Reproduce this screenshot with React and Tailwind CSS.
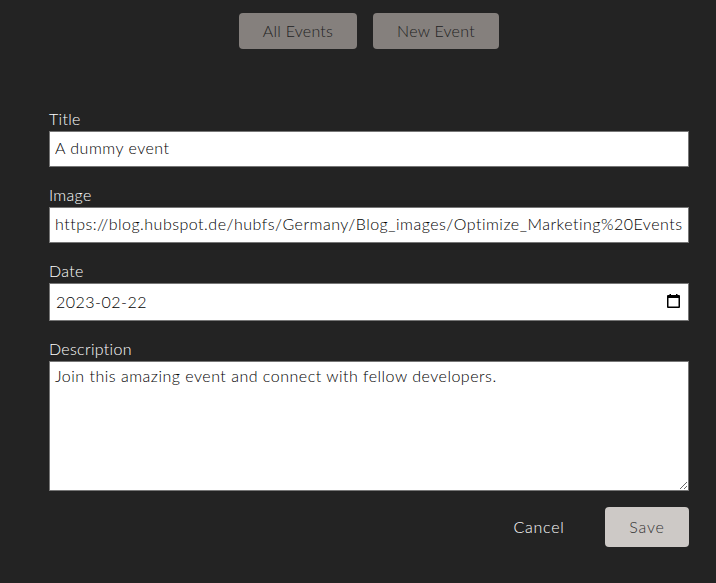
const font = "font-['Lato','Noto_Sans',sans-serif]";

function Field({ label, children, className = '' }) {
  return (
    <div className={`flex flex-col ${className}`}>
      <label className="text-[16px] font-light leading-[24px] text-white tracking-[0.3px]">{label}</label>
      {children}
    </div>
  );
}

const inputClass =
  "w-full bg-white border border-[#767676] text-[16px] font-light text-black tracking-[0.5px] px-[5px] outline-none font-['Lato','Noto_Sans',sans-serif]";

function CalendarIcon() {
  return (
    <svg width="13" height="14" viewBox="0 0 13 14" className="absolute right-[9px] top-[11px]">
      <path d="M2.5 0h1.5v1h5V0h1.5v1h1.5a1 1 0 0 1 1 1v11a1 1 0 0 1-1 1H1a1 1 0 0 1-1-1V2a1 1 0 0 1 1-1h1.5z M1.5 4v8.5h10V4z" fill="#000" fillRule="evenodd" />
    </svg>
  );
}

export default function App() {
  return (
    <div className={`min-h-[583px] bg-[#232323] pl-[49px] pr-[27px] ${font} overflow-hidden`}>
      <div className="flex justify-center gap-4 pt-[13px]">
        <button className="w-[118px] h-9 bg-[#85807d] rounded text-[16px] font-light text-[#222] tracking-[0.25px]">All Events</button>
        <button className="w-[126px] h-9 bg-[#85807d] rounded text-[16px] font-light text-[#222] tracking-[0.25px]">New Event</button>
      </div>

      <form className="mt-[58px] flex flex-col">
        <Field label="Title">
          <input className={`${inputClass} h-9 pb-[3px]`} defaultValue="A dummy event" />
        </Field>
        <Field label="Image" className="mt-4">
          <input
            className={`${inputClass} h-9 pb-[3px]`}
            defaultValue="https://blog.hubspot.de/hubfs/Germany/Blog_images/Optimize_Marketing%20Events.jpg"
          />
        </Field>
        <Field label="Date" className="mt-4">
          <div className="relative">
            <input className={`${inputClass} h-[38px] pl-[6px] pb-[2px]`} defaultValue="2023-02-22" />
            <CalendarIcon />
          </div>
        </Field>
        <Field label="Description" className="mt-4">
          <textarea
            className={`${inputClass} h-[130px] py-[2px] block`}
            defaultValue="Join this amazing event and connect with fellow developers."
          />
        </Field>
        <div className="flex justify-end items-center gap-4 mt-4">
          <button type="button" className="w-[100px] h-10 text-[16px] font-light text-white tracking-[0.7px]">Cancel</button>
          <button className="w-[84px] h-10 bg-[#cdc9c6] rounded text-[16px] font-light text-[#333] tracking-[0.8px]">Save</button>
        </div>
      </form>
    </div>
  );
}
